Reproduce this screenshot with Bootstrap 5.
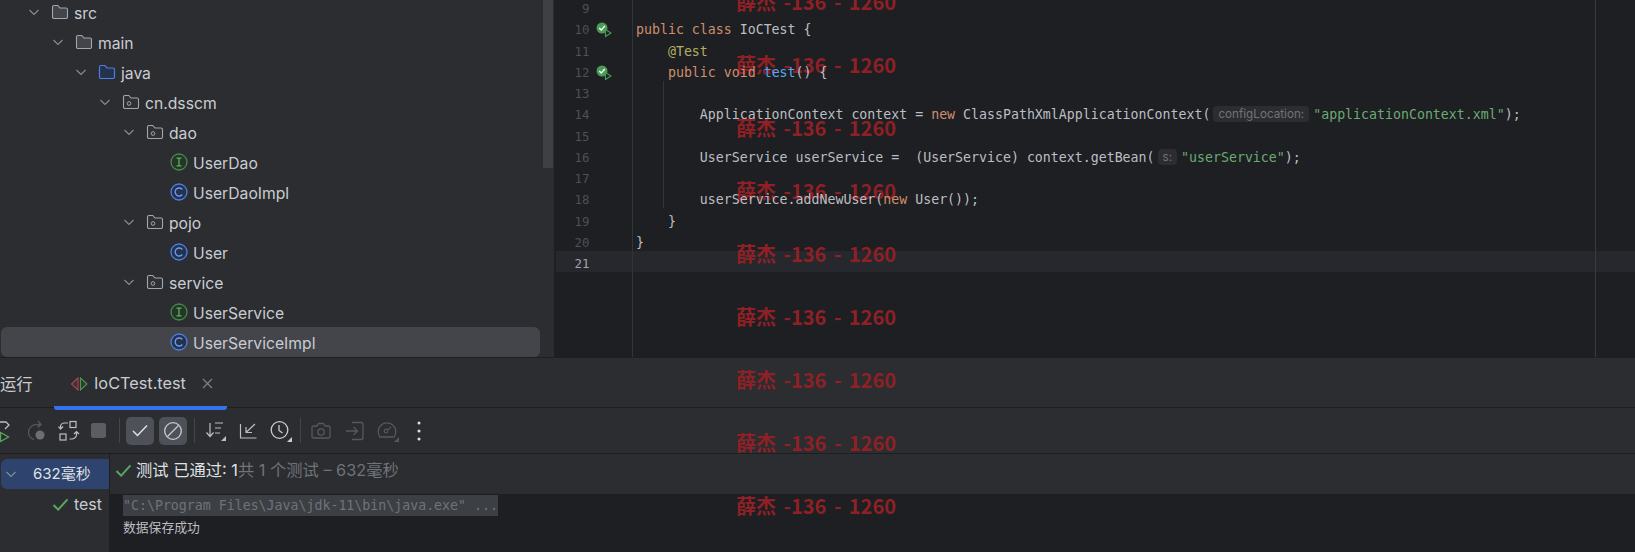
<!DOCTYPE html>
<html lang="zh">
<head>
<meta charset="utf-8">
<title>IoCTest</title>
<link rel="stylesheet" href="https://cdn.jsdelivr.net/npm/bootstrap@5.3.0/dist/css/bootstrap.min.css">
<style>
html,body{height:552px;overflow:hidden;background:#2b2d30;}
body{font-family:Inter,"Noto Sans CJK SC",sans-serif;color:#c9ccd2;position:relative;}
.ide-top{height:357px;overflow:hidden;}
.proj{width:554px;background:#2b2d30;position:relative;overflow:hidden;}
.proj-sb{position:absolute;right:1px;top:0;width:10px;height:168px;background:#3e4043;}
.tree{margin-top:-3px;padding-left:1px;}
.trow{height:30px;font-size:15.7px;width:539px;border-radius:6px;}
.trow span{padding-top:3px;}
.trow.sel{background:#43454a;}
.chev{width:12px;height:12px;margin-right:11px;flex:none;}
.tico{width:18px;height:18px;margin-right:5px;flex:none;}
.leaf{margin-left:23px;}
.lv0{padding-left:27px}.lv1{padding-left:51px}.lv2{padding-left:74px}.lv3{padding-left:98px}.lv4{padding-left:122px}.lv5{padding-left:146px}
.edit{background:#1e1f22;position:relative;overflow:hidden;padding-left:2px;font-family:"DejaVu Sans Mono",monospace;font-size:13.25px;color:#bcbec4;}
.eline{height:21.25px;flex:none;}
.eline.cur{background:#26282e;}
.elines{margin-top:-4px;height:361px;}
.gut{width:76.5px;flex:none;border-right:1px solid #313438;color:#4b5059;font-size:12.4px;text-align:right;padding-right:42px;padding-top:4px;line-height:17px;position:relative;}
.cur .gut{color:#a1a3ab;}
.gut svg{position:absolute;left:40px;top:5px;}
.filler{flex:1 1 auto;}
.cod{padding-left:3.5px;padding-top:4px;line-height:17px;white-space:pre;position:relative;z-index:2;}
.kw{color:#cf8e6d}.an{color:#b3ae60}.fn{color:#56a8f5}.st{color:#6aab73}
.hint{display:inline-block;background:#2b2d30;color:#6f737a;font:11.7px/16px Inter,sans-serif;border-radius:4px;padding:0 5px;margin:0 4px 0 3px;height:16px;vertical-align:1px;}
.guide{position:absolute;left:109px;top:81px;height:127px;width:1px;background:#313438;}
.rmargin{position:absolute;left:1041px;top:0;bottom:0;width:1px;background:#393b40;}
.tabbar{height:51px;border-top:1px solid #1e1f22;border-bottom:1px solid #1e1f22;font-size:16.3px;}
.runlbl{width:54px;flex:none;padding-top:3px;}
.ptab{width:173px;height:51px;margin-bottom:-3px;border-bottom:4px solid #3574f0;border-radius:0 0 3px 3px;padding-left:16px;padding-top:3px;position:relative;}
.ptab .tname{margin:0 16px 0 6px;}
.tbar{height:45px;position:relative;}
.tbar::after{content:"";position:absolute;left:0;right:0;bottom:-1px;height:1px;background:#1e1f22;z-index:6;}
.tbi{flex:none;display:block;position:relative;}
.tsep{width:1px;height:25px;background:#43454a;flex:none;}
.tog{width:28px;height:28px;border-radius:5px;background:#4e5157;flex:none;}
.w-tree{width:110px;flex:none;border-right:1px solid #1e1f22;padding-top:5px;padding-left:1px;font-size:15px;}
.rt{height:30px;border-radius:6px 0 0 6px;}
.rt.active{background:#2e436e;color:#dfe1e5;}
.rt svg{flex:none;}
.rchev{margin-left:4px;}
.rcheck{margin-left:3px;margin-right:5px;}
.t-name{font-size:15.9px;padding-top:1px;}
.low{height:99px;border-top:1px solid #1e1f22;}
.stat{height:40px;flex:none;background:#2b2d30;font-size:16.3px;padding-left:5px;color:#dfe1e5;padding-bottom:8px;}
.stat svg{margin-right:4px;}
.dim{color:#6f737a;}
.cons{background:#1e1f22;font-family:"DejaVu Sans Mono","Noto Sans CJK SC",monospace;font-size:13.25px;padding-left:13px;padding-top:1px;flex:1 1 auto;color:#bcbec4;}
.cons1{display:inline-block;height:21px;line-height:21px;width:375px;background:#3c3f44;color:#6f737a;white-space:pre;position:relative;}
.cons2{font-family:"Noto Sans CJK SC",sans-serif;font-size:12.8px;line-height:20px;margin-top:1px;}
.wm{position:absolute;left:736px;top:-30px;z-index:1;pointer-events:none;color:#8f2025;font:700 20px/63px "Noto Sans CJK SC",sans-serif;white-space:nowrap;word-spacing:3px;height:553px;overflow:hidden;}
.wmi{height:63px;}
</style>
</head>
<body>
<svg width="0" height="0" class="d-block position-absolute">
<defs>
<symbol id="chev" viewBox="0 0 12 12"><path d="M1.5 4 6 8.5 10.5 4" fill="none" stroke="#8a8e95" stroke-width="1.1"/></symbol>
<symbol id="fold" viewBox="0 0 18 18"><path d="M1.5 4a1.500 1.500 0 0 1 1.500-1.500h3.800l2.200 2.500h6a1.500 1.500 0 0 1 1.500 1.500v7.500a1.500 1.500 0 0 1-1.500 1.500H3a1.500 1.500 0 0 1-1.500-1.500z" fill="#43454a" stroke="#a3a6ad" stroke-width="1.1"/></symbol>
<symbol id="jfold" viewBox="0 0 18 18"><path d="M1.500 4a1.500 1.500 0 0 1 1.500-1.500h3.800l2.200 2.500h6a1.500 1.500 0 0 1 1.500 1.500v7.500a1.500 1.500 0 0 1-1.500 1.500H3a1.500 1.500 0 0 1-1.500-1.500z" fill="#25324d" stroke="#4a7fe6" stroke-width="1.2"/></symbol>
<symbol id="pkg" viewBox="0 0 18 18"><path d="M1.500 4a1.500 1.500 0 0 1 1.500-1.500h3.800l2.200 2.500h6a1.500 1.500 0 0 1 1.500 1.500v7.500a1.500 1.500 0 0 1-1.500 1.500H3a1.500 1.500 0 0 1-1.500-1.500z" fill="#2f3134" stroke="#a3a6ad" stroke-width="1.1"/><circle cx="7" cy="10.500" r="1.800" fill="none" stroke="#a3a6ad" stroke-width="1"/></symbol>
<symbol id="ifc" viewBox="0 0 18 18"><circle cx="9" cy="9" r="8" fill="#253627" stroke="#468a4f" stroke-width="1.300"/><path d="M6.500 5.200h5M6.500 12.800h5M9 5.200v7.600" fill="none" stroke="#5fad65" stroke-width="1.300"/></symbol>
<symbol id="cls" viewBox="0 0 18 18"><circle cx="9" cy="9" r="8" fill="#25324d" stroke="#4a7fe6" stroke-width="1.300"/><path d="M12.300 6.500a4 4 0 1 0 0 5" fill="none" stroke="#6f9cf0" stroke-width="1.300"/></symbol>
<symbol id="gicon" viewBox="0 0 16 16"><circle cx="6" cy="6" r="5.500" fill="#4b9a57"/><path d="M3.200 6 5.300 8 8.800 4" fill="none" stroke="#fff" stroke-width="1.400"/><path d="M9.500 7.500v7l5.500-3.500z" fill="#1e1f22" stroke="#4b9a57" stroke-width="1.100"/></symbol>
<symbol id="okc" viewBox="0 0 18 14"><path d="M1.500 7.500 6.500 12.500 16.500 1.500" fill="none" stroke="#58a65f" stroke-width="2.200"/></symbol>
</defs>
</svg>

<div class="d-flex ide-top">
  <div class="proj">
    <div class="proj-sb"></div>
    <div class="tree">
      <div class="d-flex align-items-center trow lv0"><svg class="chev"><use href="#chev"/></svg><svg class="tico"><use href="#fold"/></svg><span>src</span></div>
      <div class="d-flex align-items-center trow lv1"><svg class="chev"><use href="#chev"/></svg><svg class="tico"><use href="#fold"/></svg><span>main</span></div>
      <div class="d-flex align-items-center trow lv2"><svg class="chev"><use href="#chev"/></svg><svg class="tico"><use href="#jfold"/></svg><span>java</span></div>
      <div class="d-flex align-items-center trow lv3 "><svg class="chev"><use href="#chev"/></svg><svg class="tico"><use href="#pkg"/></svg><span>cn.dsscm</span></div>
      <div class="d-flex align-items-center trow lv4"><svg class="chev"><use href="#chev"/></svg><svg class="tico"><use href="#pkg"/></svg><span>dao</span></div>
      <div class="d-flex align-items-center trow lv5"><svg class="tico leaf"><use href="#ifc"/></svg><span>UserDao</span></div>
      <div class="d-flex align-items-center trow lv5"><svg class="tico leaf"><use href="#cls"/></svg><span>UserDaoImpl</span></div>
      <div class="d-flex align-items-center trow lv4"><svg class="chev"><use href="#chev"/></svg><svg class="tico"><use href="#pkg"/></svg><span>pojo</span></div>
      <div class="d-flex align-items-center trow lv5"><svg class="tico leaf"><use href="#cls"/></svg><span>User</span></div>
      <div class="d-flex align-items-center trow lv4"><svg class="chev"><use href="#chev"/></svg><svg class="tico"><use href="#pkg"/></svg><span>service</span></div>
      <div class="d-flex align-items-center trow lv5"><svg class="tico leaf"><use href="#ifc"/></svg><span>UserService</span></div>
      <div class="d-flex align-items-center trow lv5 sel"><svg class="tico leaf"><use href="#cls"/></svg><span>UserServiceImpl</span></div>
    </div>
  </div>
  <div class="edit flex-grow-1">
    <div class="d-flex flex-column elines">
      <div class="d-flex eline"><div class="gut">9</div><div class="cod"></div></div>
      <div class="d-flex eline"><div class="gut">10<svg width="16" height="16"><use href="#gicon"/></svg></div><div class="cod"><span class="kw">public class</span> IoCTest {</div></div>
      <div class="d-flex eline"><div class="gut">11</div><div class="cod">    <span class="an">@Test</span></div></div>
      <div class="d-flex eline"><div class="gut">12<svg width="16" height="16"><use href="#gicon"/></svg></div><div class="cod">    <span class="kw">public void</span> <span class="fn">test</span>() {</div></div>
      <div class="d-flex eline"><div class="gut">13</div><div class="cod"></div></div>
      <div class="d-flex eline"><div class="gut">14</div><div class="cod">        ApplicationContext context = <span class="kw">new</span> ClassPathXmlApplicationContext(<span class="hint">configLocation:</span><span class="st">"applicationContext.xml"</span>);</div></div>
      <div class="d-flex eline"><div class="gut">15</div><div class="cod"></div></div>
      <div class="d-flex eline"><div class="gut">16</div><div class="cod">        UserService userService =  (UserService) context.getBean(<span class="hint">s:</span><span class="st">"userService"</span>);</div></div>
      <div class="d-flex eline"><div class="gut">17</div><div class="cod"></div></div>
      <div class="d-flex eline"><div class="gut">18</div><div class="cod">        userService.addNewUser(<span class="kw">new</span> User());</div></div>
      <div class="d-flex eline"><div class="gut">19</div><div class="cod">    }</div></div>
      <div class="d-flex eline"><div class="gut">20</div><div class="cod">}</div></div>
      <div class="d-flex eline cur"><div class="gut">21</div><div class="cod flex-grow-1"></div></div>
      <div class="d-flex filler"><div class="gut"></div></div>
    </div>
    <div class="guide"></div>
    <div class="rmargin"></div>
  </div>
</div>

<div class="d-flex align-items-center tabbar">
  <div class="runlbl">运行</div>
  <div class="d-flex align-items-center ptab">
    <svg width="18" height="14" viewBox="0 0 18 14"><path d="M8 1 1.500 7 8 13z" fill="#4a2b2d" stroke="#a8494c" stroke-width="1.100"/><path d="M10.500 1 17 7l-6.500 6z" fill="#2a3e2d" stroke="#4f8f58" stroke-width="1.100"/></svg>
    <span class="tname">IoCTest.test</span>
    <svg width="11" height="11" viewBox="0 0 11 11"><path d="M1 1l9 9M10 1l-9 9" stroke="#7e8187" stroke-width="1.200"/></svg>
  </div>
</div>

<div class="d-flex align-items-center tbar">
  <svg class="tbi" style="margin-left:-9px" width="20" height="24" viewBox="0 0 20 24"><path d="M9 3h6l3 3-3 3M18 6l-4 4" fill="none" stroke="#bcbec4" stroke-width="1.300"/><path d="M9.500 13.500v9l8-4.500z" fill="none" stroke="#58a65f" stroke-width="1.300"/></svg>
  <svg class="tbi" style="margin-left:15px" width="20" height="22" viewBox="0 0 20 22"><path d="M8 19.500a7.500 7.500 0 1 1 4-14.500l3-.5M12 1l3 3.500-3 3" fill="none" stroke="#55585e" stroke-width="1.300"/><circle cx="14" cy="15" r="4.500" fill="#6b6e74"/></svg>
  <svg class="tbi" style="margin-left:12px" width="22" height="22" viewBox="0 0 22 22"><rect x="12" y="1.500" width="6" height="6" fill="none" stroke="#bcbec4" stroke-width="1.200"/><rect x="2" y="14" width="6" height="6" fill="none" stroke="#bcbec4" stroke-width="1.200"/><path d="M10 3H6a4 4 0 0 0-3.500 4v2M.500 6.500 2.500 9l2.500-2.500M11.500 19h3a5 5 0 0 0 4-6v-1M16 14l2.500-2.500L21 14" fill="none" stroke="#bcbec4" stroke-width="1.200"/></svg>
  <div class="tbi" style="margin-left:11px;width:15px;height:15px;background:#5a5d63;border-radius:2.500px"></div>
  <div class="tsep" style="margin-left:13px"></div>
  <div class="tog d-flex align-items-center justify-content-center" style="margin-left:6px"><svg width="16" height="13" viewBox="0 0 16 13"><path d="M1 7l4.500 4.500L15 1.500" fill="none" stroke="#dfe1e5" stroke-width="1.500"/></svg></div>
  <div class="tog d-flex align-items-center justify-content-center" style="margin-left:5px"><svg width="20" height="20" viewBox="0 0 20 20"><circle cx="10" cy="10" r="8.300" fill="none" stroke="#c9ccd2" stroke-width="1.300"/><path d="M4.500 15.500l11-11" stroke="#c9ccd2" stroke-width="1.300"/></svg></div>
  <div class="tsep" style="margin-left:7px"></div>
  <svg class="tbi" style="margin-left:10px" width="22" height="22" viewBox="0 0 22 22"><path d="M5 3v13M1.500 12.500 5 16.500l3.500-4M10 3h8M10 8h6M10 13h5" fill="none" stroke="#bcbec4" stroke-width="1.200"/><path d="M21 16v5h-5z" fill="#bcbec4"/></svg>
  <svg class="tbi" style="margin-left:12px" width="20" height="20" viewBox="0 0 20 20"><path d="M1.500 3v14h16M16 3 7 11.500M7 6v5.500h6" fill="none" stroke="#bcbec4" stroke-width="1.200"/></svg>
  <svg class="tbi" style="margin-left:10px" width="24" height="24" viewBox="0 0 24 24"><circle cx="10.500" cy="11" r="8.300" fill="none" stroke="#c9ccd2" stroke-width="1.300"/><path d="M10 6v5.500l3.500 2.500" fill="none" stroke="#c9ccd2" stroke-width="1.300"/><path d="M23 18v5h-5z" fill="#c9ccd2"/></svg>
  <div class="tsep" style="margin-left:7px"></div>
  <svg class="tbi" style="margin-left:10px" width="20" height="18" viewBox="0 0 20 18"><path d="M2.500 4h3.500l1.500-2.500h5L14 4h3.500A1.500 1.500 0 0 1 19 5.500v9a1.500 1.500 0 0 1-1.500 1.500h-15A1.500 1.500 0 0 1 1 14.500v-9A1.500 1.500 0 0 1 2.500 4z" fill="none" stroke="#55585e" stroke-width="1.300"/><circle cx="10" cy="10" r="3.200" fill="none" stroke="#55585e" stroke-width="1.300"/></svg>
  <svg class="tbi" style="margin-left:14px" width="20" height="20" viewBox="0 0 20 20"><path d="M7 1.500h9a2 2 0 0 1 2 2v13a2 2 0 0 1-2 2H7M1 10h11M8.500 6l4 4-4 4" fill="none" stroke="#55585e" stroke-width="1.300"/></svg>
  <svg class="tbi" style="margin-left:11px" width="24" height="22" viewBox="0 0 24 22"><path d="M4 17a8.800 8.800 0 1 1 14 0z" fill="none" stroke="#55585e" stroke-width="1.300"/><circle cx="10" cy="11" r="1.800" fill="none" stroke="#55585e" stroke-width="1.200"/><path d="M11.500 10l3.500-3" stroke="#55585e" stroke-width="1.300"/><path d="M23 17v5h-5z" fill="#55585e"/></svg>
  <svg class="tbi" style="margin-left:17px" width="4" height="20" viewBox="0 0 4 20"><circle cx="2" cy="2" r="1.500" fill="#dfe1e5"/><circle cx="2" cy="10" r="1.500" fill="#dfe1e5"/><circle cx="2" cy="18" r="1.500" fill="#dfe1e5"/></svg>
</div>

<div class="d-flex low">
  <div class="w-tree">
    <div class="d-flex align-items-center rt active"><svg width="12" height="12" class="rchev"><use href="#chev"/></svg><span class="ms-3">632毫秒</span></div>
    <div class="d-flex align-items-center rt ps-5"><svg width="17" height="13" class="rcheck"><use href="#okc"/></svg><span class="t-name">test</span></div>
  </div>
  <div class="flex-grow-1 d-flex flex-column">
    <div class="d-flex align-items-center stat"><svg width="17" height="13"><use href="#okc"/></svg><span>测试 已通过: 1</span><span class="dim">共 1 个测试 – 632毫秒</span></div>
    <div class="cons">
      <div class="cons1">"C:\Program Files\Java\jdk-11\bin\java.exe" ...</div>
      <div class="cons2">数据保存成功</div>
    </div>
  </div>
</div>

<div class="wm"><div class="wmi">薛杰 -136 - 1260</div><div class="wmi">薛杰 -136 - 1260</div><div class="wmi">薛杰 -136 - 1260</div><div class="wmi">薛杰 -136 - 1260</div><div class="wmi">薛杰 -136 - 1260</div><div class="wmi">薛杰 -136 - 1260</div><div class="wmi">薛杰 -136 - 1260</div><div class="wmi">薛杰 -136 - 1260</div><div class="wmi">薛杰 -136 - 1260</div></div>
<script src="https://cdn.jsdelivr.net/npm/bootstrap@5.3.0/dist/js/bootstrap.bundle.min.js"></script>
</body>
</html>
